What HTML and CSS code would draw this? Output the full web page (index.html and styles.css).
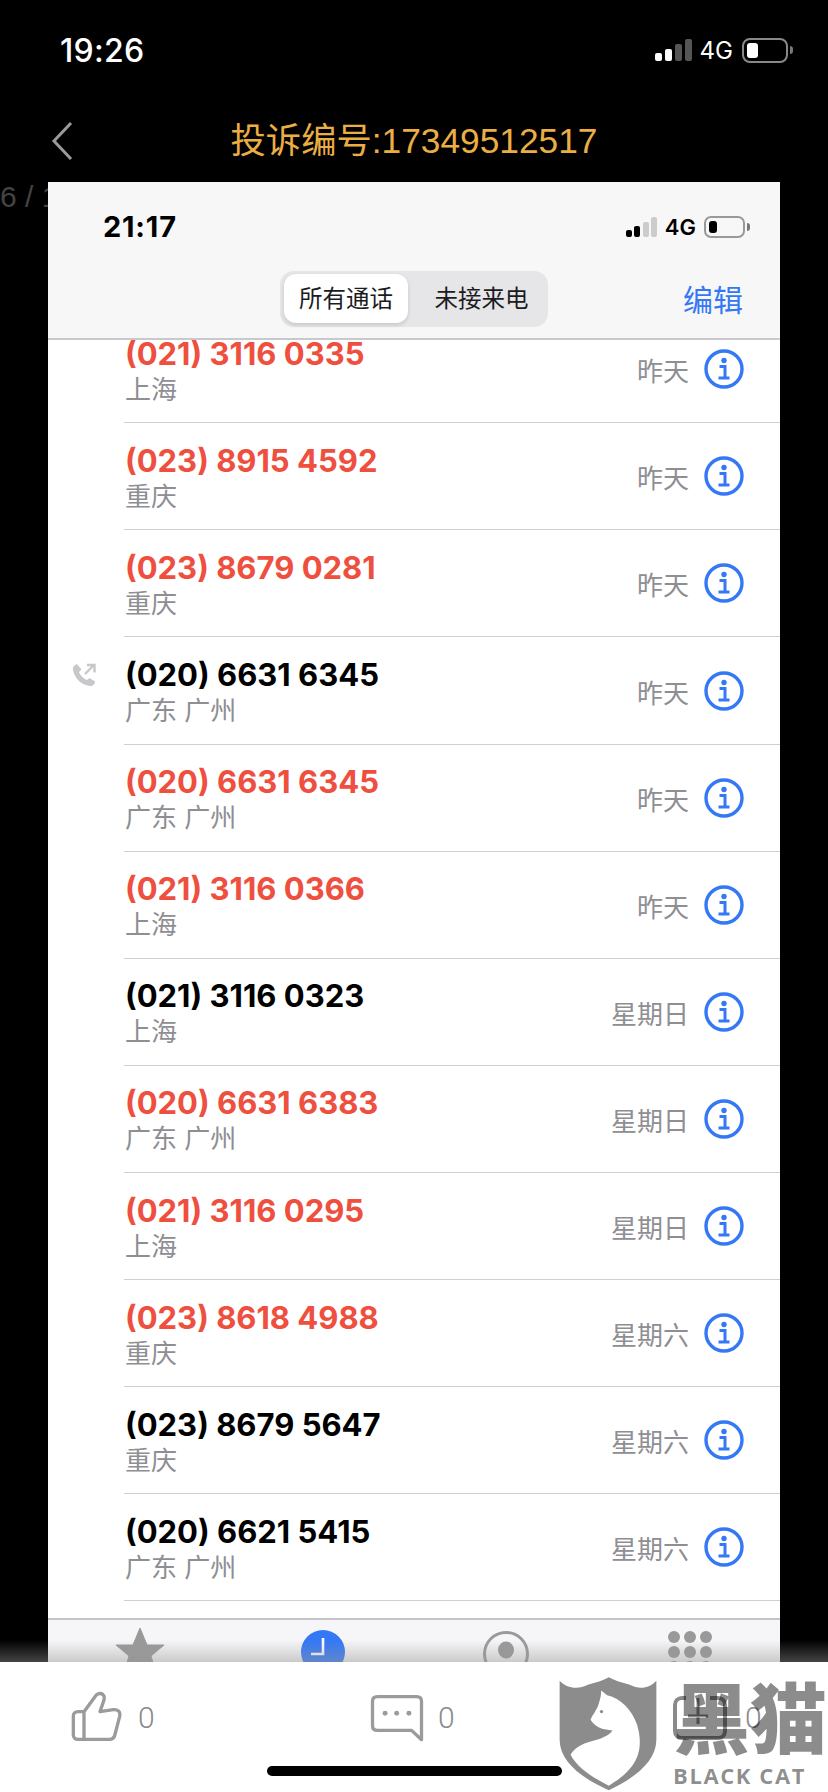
FILE: index.html
```html
<!DOCTYPE html>
<html lang="zh-CN">
  <head>
    <meta charset="UTF-8">
    <meta name="viewport" content="width=device-width, initial-scale=1.0">
    <title>投诉编号:17349512517</title>
    <link rel="stylesheet" href="styles.css">
  </head>
  <body>
    <svg class="defs" aria-hidden="true">
      <symbol id="info" viewBox="0 0 40 40">
        <circle cx="20" cy="20" r="18" fill="none" stroke="#3478f6" stroke-width="3.4"/>
        <circle cx="20" cy="11.5" r="2.7" fill="#3478f6"/>
        <path d="M15.5 17.5h5.5v11.5M14.5 29h11" fill="none" stroke="#3478f6" stroke-width="3"/>
      </symbol>
    </svg>
    <div class="page">
      <div class="status">
        <span class="status-time">19:26</span>
        <div class="status-right">
          <div class="signal">
            <i class="bar b1"></i><i class="bar b2"></i><i class="bar b3 off"></i><i class="bar b4 off"></i>
          </div>
          <span class="net">4G</span>
          <div class="battery"><i class="battery-fill"></i></div>
          <i class="battery-nub"></i>
        </div>
      </div>

      <div class="titlebar">
        <svg class="back" viewBox="0 0 22 40" width="22" height="40"><path d="M20 2 3 20l17 18" fill="none" stroke="#9a9a9a" stroke-width="3"/></svg>
        <h1 class="title">投诉编号:17349512517</h1>
      </div>

      <div class="stage">
        <span class="counter">6 / 12</span>
        <div class="shot">
          <div class="shot-top">
            <div class="shot-status">
              <span class="shot-time">21:17</span>
              <div class="shot-right">
                <div class="signal signal-small">
                  <i class="bar b1"></i><i class="bar b2"></i><i class="bar b3 off"></i><i class="bar b4 off"></i>
                </div>
                <span class="net net-small">4G</span>
                <div class="battery battery-small"><i class="battery-fill"></i></div>
                <i class="battery-nub"></i>
              </div>
            </div>
            <div class="shot-header">
              <div class="seg">
                <span class="seg-item seg-on">所有通话</span>
                <span class="seg-item">未接来电</span>
              </div>
              <a class="edit">编辑</a>
            </div>
          </div>

          <div class="calls">
            <div class="calls-inner">
              <div class="row"><div class="who"><div class="num red">(021) 3116 0335</div><div class="loc">上海</div></div><span class="when">昨天</span><svg class="info"><use href="#info"/></svg></div>
              <div class="row"><div class="who"><div class="num red">(023) 8915 4592</div><div class="loc">重庆</div></div><span class="when">昨天</span><svg class="info"><use href="#info"/></svg></div>
              <div class="row"><div class="who"><div class="num red">(023) 8679 0281</div><div class="loc">重庆</div></div><span class="when">昨天</span><svg class="info"><use href="#info"/></svg></div>
              <div class="row">
                <svg class="outgoing" viewBox="0 0 24 24"><path d="M5 1C3 2 .5 3.500 1 7c1.500 8 8 15 17 16 3 0 5-2 5-4.500L17.500 15 15 17c-3-1-7-5-8-8l2.500-2.500z" fill="#c8c8cc"/><path d="M13 11l8.500-8.500M15 2h7.500v7.500" fill="none" stroke="#c8c8cc" stroke-width="2.4"/></svg>
                <div class="who"><div class="num">(020) 6631 6345</div><div class="loc">广东 广州</div></div><span class="when">昨天</span><svg class="info"><use href="#info"/></svg>
              </div>
              <div class="row"><div class="who"><div class="num red">(020) 6631 6345</div><div class="loc">广东 广州</div></div><span class="when">昨天</span><svg class="info"><use href="#info"/></svg></div>
              <div class="row"><div class="who"><div class="num red">(021) 3116 0366</div><div class="loc">上海</div></div><span class="when">昨天</span><svg class="info"><use href="#info"/></svg></div>
              <div class="row"><div class="who"><div class="num">(021) 3116 0323</div><div class="loc">上海</div></div><span class="when">星期日</span><svg class="info"><use href="#info"/></svg></div>
              <div class="row"><div class="who"><div class="num red">(020) 6631 6383</div><div class="loc">广东 广州</div></div><span class="when">星期日</span><svg class="info"><use href="#info"/></svg></div>
              <div class="row"><div class="who"><div class="num red">(021) 3116 0295</div><div class="loc">上海</div></div><span class="when">星期日</span><svg class="info"><use href="#info"/></svg></div>
              <div class="row"><div class="who"><div class="num red">(023) 8618 4988</div><div class="loc">重庆</div></div><span class="when">星期六</span><svg class="info"><use href="#info"/></svg></div>
              <div class="row"><div class="who"><div class="num">(023) 8679 5647</div><div class="loc">重庆</div></div><span class="when">星期六</span><svg class="info"><use href="#info"/></svg></div>
              <div class="row"><div class="who"><div class="num">(020) 6621 5415</div><div class="loc">广东 广州</div></div><span class="when">星期六</span><svg class="info"><use href="#info"/></svg></div>
            </div>
          </div>

          <div class="tabs">
            <svg class="tab-star" viewBox="0 0 48 48" width="48" height="48">
              <path d="M24 0l7 17 17 0-13 11 6 20-17-11-17 11 6-20L0 17l17 0z" fill="#999" stroke="#999" stroke-width="1" stroke-linejoin="round"/>
            </svg>
            <svg class="tab-clock" viewBox="0 0 44 44" width="44" height="44">
              <circle cx="22" cy="22" r="22" fill="#3478f6"/>
              <path d="M22 8v16H10" fill="none" stroke="#fff" stroke-width="2.600"/>
            </svg>
            <svg class="tab-contact" viewBox="0 0 48 42" width="48" height="42">
              <circle cx="24" cy="24" r="21.500" fill="none" stroke="#9a9a9a" stroke-width="3"/>
              <ellipse cx="24" cy="20" rx="8" ry="8.500" fill="#999"/>
            </svg>
            <svg class="tab-keys" viewBox="0 0 46 42" width="46" height="42">
              <g fill="#999">
                <circle cx="7" cy="9" r="6"/><circle cx="23" cy="9" r="6"/><circle cx="39" cy="9" r="6"/>
                <circle cx="7" cy="24" r="6"/><circle cx="23" cy="24" r="6"/><circle cx="39" cy="24" r="6"/>
                <circle cx="7" cy="39" r="6"/><circle cx="23" cy="39" r="6"/><circle cx="39" cy="39" r="6"/>
              </g>
            </svg>
          </div>
        </div>
      </div>

      <div class="footer">
        <div class="action action-like">
          <svg class="act-icon" viewBox="60 30 168 168" width="56" height="56">
            <path d="M84 95h18l33-45c6-10 16-12 24-6 6 5 4 14 1 22l-10 29 40-6c14-1 22 6 19 20l-14 54c-2 10-7 15-17 15H84c-8 0-14-5-14-13v-57c0-8 6-13 14-13zM102 95v85" fill="none" stroke="#9b9b9b" stroke-width="10" stroke-linejoin="round"/>
          </svg>
          <span class="count">0</span>
        </div>
        <div class="action action-talk">
          <svg class="act-icon" viewBox="30 50 165 145" width="55" height="48">
            <path d="M52 58h118c10 0 15 5 15 14v116l-30-28H52c-10 0-15-5-15-14V72c0-9 5-14 15-14z" fill="none" stroke="#9b9b9b" stroke-width="10" stroke-linejoin="round"/>
            <circle cx="75" cy="108" r="7.500" fill="#9b9b9b"/><circle cx="110" cy="108" r="7.500" fill="#9b9b9b"/><circle cx="147" cy="108" r="7.500" fill="#9b9b9b"/>
          </svg>
          <span class="count">0</span>
        </div>
        <div class="action action-share">
          <svg class="act-icon" viewBox="0 0 54 46" width="54" height="46">
            <path d="M13 3H9C5 3 2 6 2 10v26c0 4 3 7 7 7h36c4 0 7-3 7-7V10c0-4-3-7-7-7h-8" fill="none" stroke="#8a8a8a" stroke-width="4"/>
            <path d="M25 3v26M15 21h20" fill="none" stroke="#8a8a8a" stroke-width="3"/>
          </svg>
          <span class="count count-share">0</span>
        </div>

        <div class="watermark">
          <svg class="shield" viewBox="50 45 305 355" width="102" height="118">
            <path d="M57 62c20 22 55 28 85 12 25-6 45-12 63-22 18 10 38 16 63 22 30 16 60 10 80-12v178c0 60-55 110-143 152C112 350 57 300 57 240z" fill="#8c8c8c"/>
            <path d="M182 92l18 14c40 9 75 44 90 89 15 50 10 95-20 130-20 25-45 40-65 53-45-23-95-53-115-93 10-20 35-33 60-40 30-7 55-17 66-33-26-2-51-7-66-32 5-15 20-30 25-50 5-15 7-25 7-38z" fill="#fff"/>
            <circle cx="183" cy="155" r="5" fill="#8c8c8c"/>
          </svg>
          <div class="mark-text">
            <div class="mark-zh">黑猫</div>
            <div class="mark-en">BLACK CAT</div>
          </div>
        </div>
        <i class="homebar"></i>
      </div>
    </div>
  </body>
</html>
```

FILE: styles.css
```css
html, body { margin: 0; padding: 0; background: #000; }
h1 { margin: 0; font-weight: normal; }
i { display: block; }
.defs { position: absolute; width: 0; height: 0; }

.page { display: flex; flex-direction: column; width: 828px; height: 1792px; overflow: hidden; background: #000; font-family: Inter, "Noto Sans CJK SC", sans-serif; }

/* top status bar */
.status { display: flex; justify-content: space-between; align-items: center; flex: none; height: 100px; padding: 0 35px 0 60px; box-sizing: border-box; color: #fff; }
.status-time { font-size: 32px; font-weight: 500; letter-spacing: 0.3px; }
.status-right { display: flex; align-items: center; }
.signal { display: flex; align-items: flex-end; gap: 3px; width: 37px; height: 22px; }
.bar { width: 7.5px; border-radius: 2px; background: #fff; }
.b1 { height: 8px; }
.b2 { height: 12px; }
.b3 { height: 17px; }
.b4 { height: 22px; }
.bar.off { background: #555; }
.net { margin-left: 8px; font-size: 24px; font-weight: 400; }
.battery { box-sizing: border-box; width: 46px; height: 25px; margin-left: 9px; padding: 3px; border: 2px solid #888; border-radius: 8px; }
.battery-fill { width: 11px; height: 100%; border-radius: 3px; background: #fff; }
.battery-nub { width: 3px; height: 8px; margin-left: 2px; border-radius: 0 3px 3px 0; background: #777; }

/* title bar */
.titlebar { display: grid; grid-template-columns: 1fr auto 1fr; align-items: center; flex: none; height: 82px; padding-left: 51px; padding-bottom: 1px; box-sizing: border-box; }
.back { display: block; }
.title { margin-left: -51px; color: #ebae45; font-family: "Liberation Sans", "Noto Sans CJK SC", sans-serif; font-size: 35.300px; font-weight: 400; line-height: 44px; white-space: nowrap; }

/* screenshot inside the page */
.stage { position: relative; flex: 1; min-height: 0; padding-left: 48px; }
.counter { position: absolute; left: 0; top: 0; color: #444; font-family: "Liberation Sans", sans-serif; font-size: 30px; line-height: 30px; white-space: nowrap; }
.shot { position: relative; display: flex; flex-direction: column; width: 732px; height: 100%; overflow: hidden; background: #fff; }
.shot-top { flex: none; background: #f7f7f8; border-bottom: 2px solid #c9c9cb; }
.shot-status { display: flex; justify-content: space-between; align-items: center; height: 89px; padding: 0 30px 0 55px; box-sizing: border-box; }
.shot-time { color: #000; font-size: 29px; font-weight: 700; letter-spacing: 0.8px; }
.shot-right { display: flex; align-items: center; }
.signal-small { gap: 2.500px; width: 32px; height: 20px; }
.signal-small .bar { width: 6px; }
.signal-small .b1 { height: 7px; }
.signal-small .b2 { height: 11px; }
.signal-small .b3 { height: 15px; }
.signal-small .b4 { height: 20px; }
.signal-small .bar { background: #000; }
.signal-small .bar.off { background: #ccc; }
.net-small { margin-left: 7px; color: #000; font-size: 22px; font-weight: 600; }
.battery-small { width: 41px; height: 22px; margin-left: 8px; padding: 3px; border-color: #999; border-radius: 7px; }
.battery-small .battery-fill { width: 8px; background: #000; }

.shot-header { display: grid; grid-template-columns: 1fr auto 1fr; align-items: center; height: 67px; padding-bottom: 11px; box-sizing: border-box; }
.seg { grid-column: 2; display: flex; align-items: center; box-sizing: border-box; width: 268px; height: 56px; padding: 3px 4px 4px; border-radius: 14px; background: #e6e6e9; }
.seg-item { flex: 1; padding-left: 11px; color: #1c1c1e; font-size: 23.500px; line-height: 49px; text-align: center; white-space: nowrap; }
.seg-on { flex: none; width: 124px; padding-left: 0; border-radius: 12px; background: #fff; box-shadow: 0 2px 4px rgba(0, 0, 0, 0.14); }
.edit { grid-column: 3; justify-self: end; margin-right: 37px; padding-top: 1px; color: #3478f6; font-size: 30px; line-height: 40px; }

/* call list */
.calls { flex: 1; min-height: 0; overflow: hidden; }
.calls-inner { margin-top: -23.800px; }
.row { position: relative; display: flex; align-items: center; box-sizing: border-box; height: 107.100px; margin-left: 76px; padding-right: 36px; border-bottom: 1.500px solid #cfcfd1; }
.who { flex: 1; padding-left: 1px; padding-top: 5px; }
.num { color: #000; font-size: 31px; font-weight: 700; line-height: 36px; white-space: nowrap; }
.num.red { color: #ee4f3e; }
.loc { color: #8e8e93; font-size: 26px; line-height: 36px; }
.when { margin-right: 15px; padding-top: 1px; color: #8e8e93; font-size: 26px; }
.info { display: block; width: 40px; height: 40px; }
.outgoing { position: absolute; left: -52px; top: 26px; width: 24px; height: 24px; }

/* tab bar, cut off by the footer */
.tabs { position: relative; flex: none; height: 42px; border-top: 2px solid #c4c4c6; background: #f6f6f8; overflow: hidden; }
.tab-star { position: absolute; left: 68px; top: 8px; }
.tab-clock { position: absolute; left: 253px; top: 10px; }
.tab-contact { position: absolute; left: 434px; top: 10px; }
.tab-keys { position: absolute; left: 619px; top: 8px; }

/* footer */
.footer { position: relative; display: flex; align-items: flex-start; flex: none; height: 130px; box-sizing: border-box; padding: 28px 0 0 70px; background: #fff; }
.footer::before { content: ""; position: absolute; left: 0; right: 0; top: -22px; height: 22px; background: linear-gradient(rgba(150, 150, 150, 0), rgba(150, 150, 150, 0.45)); }
.action { display: flex; align-items: center; height: 56px; }
.action-like { width: 300px; gap: 12px; }
.action-talk { width: 303px; gap: 13px; }
.action-share { gap: 18px; }
.act-icon { display: block; flex: none; }
.count { color: #8a8a8e; font-family: Roboto, "Liberation Sans", sans-serif; font-size: 30px; font-weight: 300; line-height: 40px; }

.watermark { position: absolute; left: 557px; top: 13px; display: flex; align-items: flex-start; }
.shield { display: block; flex: none; }
.mark-text { margin-left: 14px; color: rgba(0, 0, 0, 0.45); }
.mark-zh { font-family: "Noto Sans CJK SC", sans-serif; font-size: 77px; font-weight: 900; line-height: 80px; white-space: nowrap; }
.mark-en { margin-top: 9px; font-family: "Open Sans", sans-serif; font-size: 22px; font-weight: 700; line-height: 22px; letter-spacing: 1.600px; white-space: nowrap; }
.homebar { position: absolute; left: 267px; bottom: 16px; width: 295px; height: 10px; border-radius: 5px; background: #000; }
```
